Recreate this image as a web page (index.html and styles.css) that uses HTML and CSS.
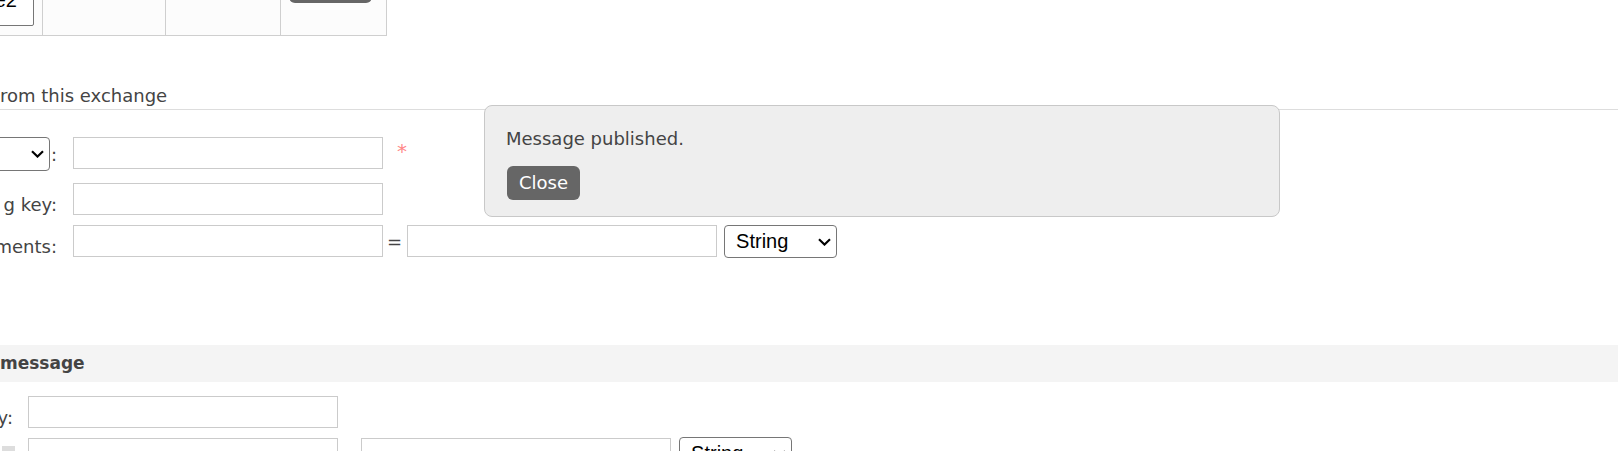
FILE: index.html
```html
<!DOCTYPE html>
<html lang="en">
<head>
<meta charset="utf-8">
<title>Exchange</title>
<link rel="stylesheet" href="styles.css">
</head>
<body>
<div class="page">
  <div class="bindings">
    <div class="cell cell-to"><div class="dest-box">e2</div></div>
    <div class="cell cell-key"></div>
    <div class="cell cell-args"></div>
    <div class="cell cell-action"><div class="unbind-btn"></div></div>
  </div>

  <h3 class="subhead">rom this exchange</h3>

  <div class="form form-binding">
    <div class="row row-first">
      <div class="label">
        <div class="select select-dest"><span class="select-text">To queue</span><svg class="chev" width="13" height="8" viewBox="0 0 13 8"><path d="M1 1.2 L6.5 6.6 L12 1.2" fill="none" stroke="#000" stroke-width="2.1"/></svg></div><span class="colon">:</span>
      </div>
      <input class="field" type="text">
      <span class="mand">*</span>
    </div>
    <div class="row">
      <div class="label"><span>g key:</span></div>
      <input class="field" type="text">
    </div>
    <div class="row">
      <div class="label"><span>ments:</span></div>
      <input class="field" type="text">
      <span class="eq">=</span>
      <input class="field" type="text">
      <div class="select select-type"><span class="select-text">String</span><svg class="chev" width="13" height="8" viewBox="0 0 13 8"><path d="M1 1.2 L6.5 6.6 L12 1.2" fill="none" stroke="#000" stroke-width="2.1"/></svg></div>
    </div>
  </div>

  <div class="section">
    <h2 class="section-title">message</h2>
    <div class="form form-publish">
      <div class="row">
        <div class="label"><span>y:</span></div>
        <input class="field" type="text">
      </div>
      <div class="row">
        <div class="label"><span class="help-box"></span></div>
        <input class="field" type="text">
        <span class="eq">=</span>
        <input class="field" type="text">
        <div class="select select-type"><span class="select-text">String</span><svg class="chev" width="13" height="8" viewBox="0 0 13 8"><path d="M1 1.2 L6.5 6.6 L12 1.2" fill="none" stroke="#000" stroke-width="2.1"/></svg></div>
      </div>
    </div>
  </div>

  <div class="popup">
    <p class="popup-text">Message published.</p>
    <span class="popup-close">Close</span>
  </div>
</div>
</body>
</html>
```

FILE: styles.css
```css
html, body {
  margin: 0;
  padding: 0;
  background: #fff;
}

body {
  overflow: hidden;
  font-family: "DejaVu Sans", Verdana, sans-serif;
  font-size: 18px;
  line-height: 22px;
  color: #444;
}

.page {
  position: relative;
  width: 1618px;
  height: 451px;
}

/* bindings table fragment */
.bindings {
  display: flex;
  width: fit-content;
  height: 35px;
  border-bottom: 1px solid #cfcfcf;
}

.cell {
  box-sizing: border-box;
  height: 35px;
  background: #fcfcfc;
}

.cell-to { width: 42px; }
.cell-key { width: 123px; border-left: 1px solid #cfcfcf; }
.cell-args { width: 115px; border-left: 1px solid #cfcfcf; }
.cell-action { width: 107px; border-left: 1px solid #cfcfcf; border-right: 1px solid #cfcfcf; }

.dest-box {
  box-sizing: border-box;
  margin: -12px 0 0 -20px;
  width: 54px;
  height: 38px;
  border: 1px solid #767676;
  border-radius: 0 0 2px 0;
  background: #fff;
  padding-right: 16px;
  text-align: right;
  font-family: "Liberation Sans", Arial, sans-serif;
  font-size: 20px;
  line-height: 23px;
  color: #000;
}

.unbind-btn {
  margin: -20px 0 0 8px;
  width: 83px;
  height: 23px;
  background: #666;
  border-radius: 6px;
}

/* heading */
.subhead {
  margin: 49px 0 0;
  padding: 0 0 2px;
  font-size: 18px;
  font-weight: normal;
  line-height: 22px;
  color: #444;
  border-bottom: 1px solid #ddd;
}

/* forms */
.form-binding {
  margin-top: 27px;
}

.row {
  display: flex;
  align-items: flex-start;
  margin-bottom: 9px;
}

.row-first {
  margin-bottom: 12px;
}

.row:last-child {
  margin-bottom: 0;
}

.label {
  flex: none;
  width: 57px;
  display: flex;
  justify-content: flex-end;
  align-items: baseline;
  padding-top: 11px;
  white-space: nowrap;
  color: #444;
}

.row-first .label {
  padding-top: 0;
}

.colon {
  margin-left: 1px;
}

.field {
  flex: none;
  box-sizing: border-box;
  width: 310px;
  height: 32px;
  margin: 0 0 0 16px;
  padding: 0 4px;
  border: 1px solid #cbcbcb;
  border-radius: 0;
  background: #fff;
  outline: none;
}

.mand {
  margin-left: 14px;
  padding-top: 3px;
  font-size: 20px;
  color: #f88;
}

.eq {
  margin: 0 5px 0 4px;
  padding-top: 6px;
  color: #444;
}

.eq + .field {
  margin-left: 0;
}

.select {
  flex: none;
  box-sizing: border-box;
  display: flex;
  align-items: center;
  justify-content: space-between;
  border: 1px solid #767676;
  border-radius: 4px;
  background: #fff;
  padding: 0 5px 0 11px;
  font-family: "Liberation Sans", Arial, sans-serif;
  font-size: 20px;
  line-height: 23px;
  color: #000;
  white-space: nowrap;
}

.select-dest {
  width: 200px;
  height: 34px;
}

.select-type {
  width: 113px;
  height: 33px;
  margin-left: 7px;
}

.chev {
  flex: none;
  display: block;
}

/* publish section */
.section {
  margin-top: 87px;
}

.section-title {
  margin: 0;
  height: 37px;
  padding: 0;
  background: #f4f4f4;
  font-size: 17px;
  font-weight: bold;
  line-height: 37px;
  color: #444;
}

.form-publish {
  margin-top: 14px;
}

.form-publish .label {
  width: 13px;
  padding-right: 2px;
  box-sizing: content-box;
  margin-right: -2px;
}

.form-publish .field {
  margin-left: 15px;
}

.form-publish .eq {
  margin-left: 3px;
}

.form-publish .eq + .field {
  margin-left: 0;
}

.form-publish .select-type {
  margin-left: 8px;
  margin-top: -1px;
}

.help-box {
  display: block;
  width: 13px;
  height: 20px;
  margin-top: -3px;
  margin-right: -2px;
  background: #ddd;
}

/* popup overlay */
.popup {
  position: absolute;
  left: 484px;
  top: 105px;
  box-sizing: border-box;
  width: 796px;
  height: 112px;
  padding: 22px 21px 16px;
  background: #eee;
  border: 1px solid #c8c8c8;
  border-radius: 8px;
}

.popup-text {
  margin: 0 0 16px;
  font-size: 18px;
  line-height: 22px;
  color: #444;
}

.popup-close {
  display: inline-block;
  margin-left: 1px;
  width: 73px;
  height: 34px;
  line-height: 34px;
  text-align: center;
  background: #666;
  color: #fff;
  border-radius: 6px;
  font-size: 18px;
}
```
